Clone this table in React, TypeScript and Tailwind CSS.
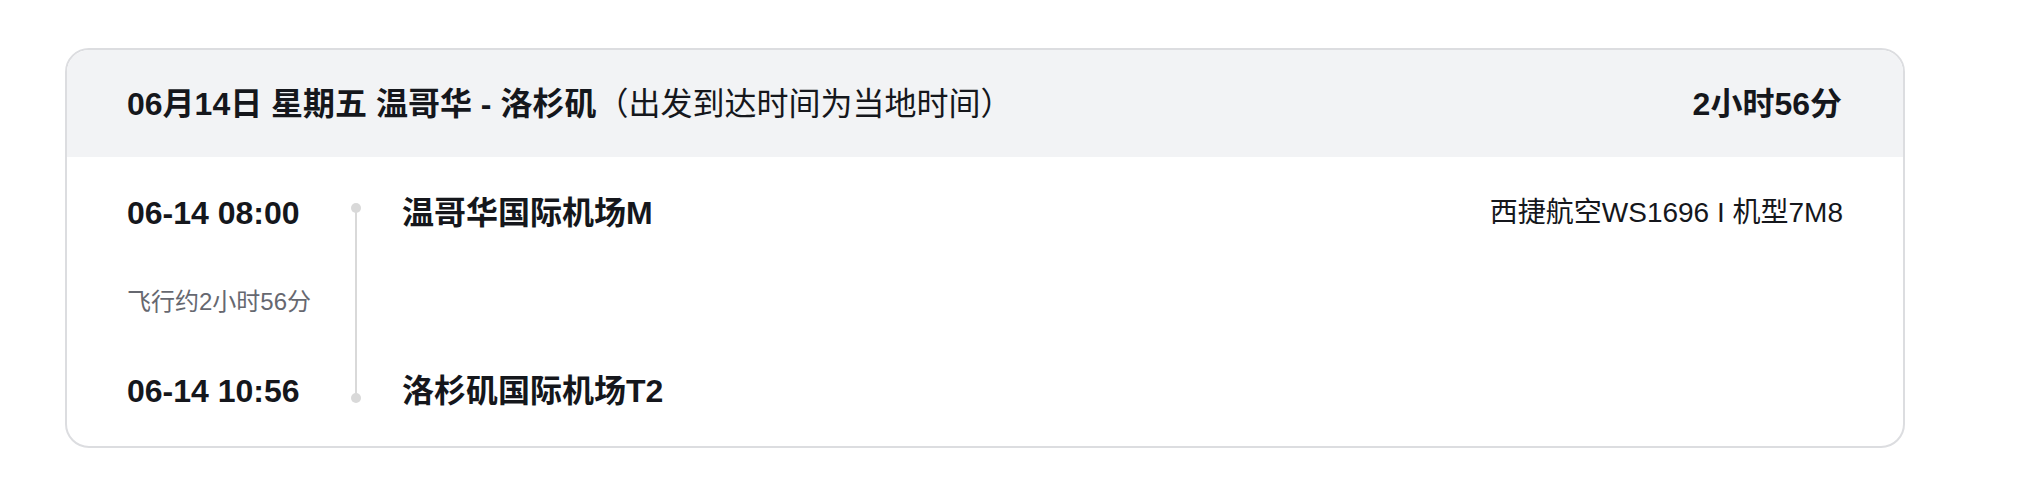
import React from "react";

export default function App() {
  const font = { fontFamily: '"Liberation Sans", "Noto Sans CJK SC", sans-serif' };
  return (
    <div className="w-[2028px] h-[500px] bg-white pt-[48px] pl-[65px]" style={font}>
      <div className="w-[1840px] rounded-[24px] border-2 border-[#dcdde0] overflow-hidden text-[#15171c]">
        <div className="h-[107px] bg-[#f2f3f5] flex items-center justify-between pl-[60px] pr-[61px]">
          <div className="text-[32px] leading-[32px] whitespace-nowrap">
            <span className="font-bold">06月14日 星期五 温哥华 - 洛杉矶</span>
            <span className="font-normal">（出发到达时间为当地时间）</span>
          </div>
          <div className="text-[32px] leading-[32px] font-bold whitespace-nowrap">2小时56分</div>
        </div>
        <div className="flex pl-[60px] pr-[60px] pt-[40px] pb-[39px]">
          <div className="w-[224px] flex flex-col justify-between h-[210px]">
            <div className="text-[32px] leading-[32px] font-bold whitespace-nowrap">06-14 08:00</div>
            <div className="text-[24px] leading-[28px] text-[#666870] whitespace-nowrap">飞行约2小时56分</div>
            <div className="text-[32px] leading-[32px] font-bold whitespace-nowrap">06-14 10:56</div>
          </div>
          <div className="w-[10px] flex flex-col items-center pt-[6px] pb-[4px]">
            <div className="w-[10px] h-[10px] rounded-full bg-[#d9d9d9] shrink-0" />
            <div className="w-[2px] flex-1 bg-[#d9d9d9] -my-[2px]" />
            <div className="w-[10px] h-[10px] rounded-full bg-[#d9d9d9] shrink-0" />
          </div>
          <div className="ml-[41px] flex flex-col justify-between h-[210px]">
            <div className="text-[32px] leading-[32px] font-bold whitespace-nowrap">温哥华国际机场M</div>
            <div className="text-[32px] leading-[32px] font-bold whitespace-nowrap">洛杉矶国际机场T2</div>
          </div>
          <div className="flex-1 flex justify-end">
            <div className="text-[28px] leading-[32px] whitespace-nowrap">西捷航空WS1696 I 机型7M8</div>
          </div>
        </div>
      </div>
    </div>
  );
}
